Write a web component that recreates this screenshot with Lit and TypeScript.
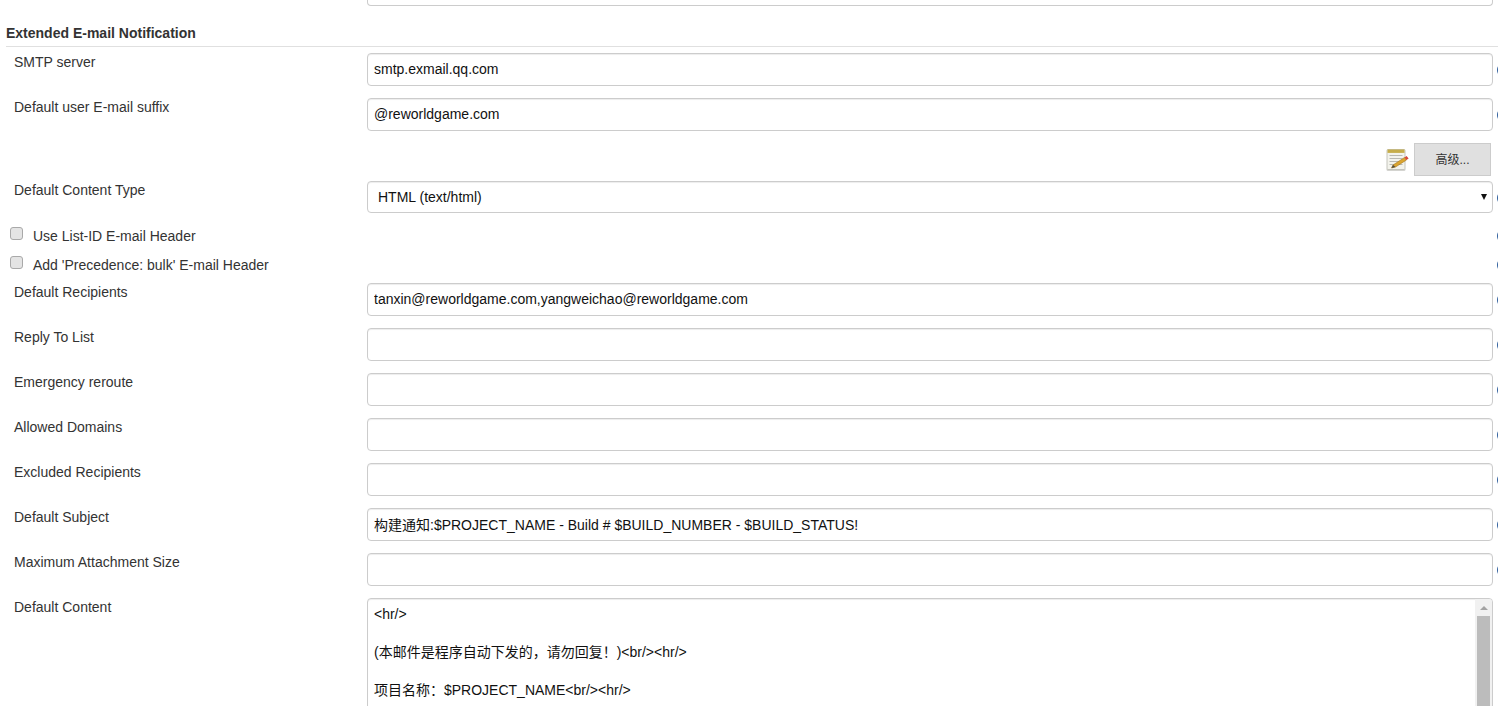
import { LitElement, html, css, svg } from "lit";
import { customElement } from "lit/decorators.js";

const FONT = `Arial, "Liberation Sans", "Noto Sans CJK SC", sans-serif`;

const help = html`<svg class="help" viewBox="0 0 16 16" width="16" height="16" aria-hidden="true">
  <circle cx="8" cy="8" r="7" fill="#2f5f9e"></circle>
  <circle cx="8" cy="8" r="5" fill="#fff"></circle>
</svg>`;

const noteIcon = html`<svg class="note" viewBox="0 0 24 24" width="24" height="24" aria-hidden="true">
  <rect x="1.5" y="20" width="19" height="3" rx="1.5" fill="#d4d4d0"></rect>
  <rect x="2" y="1.5" width="18" height="20" rx="1" fill="#f3f3ec" stroke="#c4c4bc"></rect>
  <rect x="2.5" y="1.5" width="17" height="3.4" fill="#c6ad4a"></rect>
  ${[7.5, 10.5, 13.5, 16.5].map((y) => svg`<line x1="4.5" x2="17.5" y1=${y} y2=${y} stroke="#b9b9b2"></line>`)}
  <path d="M8 17 L19.5 9.5 L21.5 12 L10.5 19 L6.5 20 Z" fill="#dba52f" stroke="#a4751f" stroke-width=".6"></path>
  <path d="M19.5 9.5 L21.6 8 L23.6 10.5 L21.5 12 Z" fill="#d8483a"></path>
  <path d="M6.5 20 L8 17 L10.5 19 Z" fill="#4a4a44"></path>
</svg>`;

const content = `<hr/>

(本邮件是程序自动下发的，请勿回复！)<br/><hr/>

项目名称：$PROJECT_NAME<br/><hr/>`;

@customElement("app-root")
export class AppRoot extends LitElement {
  static styles = css`
    :host {
      display: block;
      width: 1498px;
      height: 706px;
      overflow: hidden;
      background: #fff;
      font-family: ${css([FONT] as unknown as TemplateStringsArray)};
      font-size: 14px;
      color: #333;
    }
    .page {
      width: 1530px;
    }
    .stub {
      margin-left: 367px;
      width: 1126px;
      height: 6px;
      box-sizing: border-box;
      border: 1px solid #ccc;
      border-top: 0;
      border-radius: 0 0 4px 4px;
    }
    .section {
      margin: 19px 0 0 6px;
      width: 1492px;
      height: 22px;
      box-sizing: border-box;
      border-bottom: 1px solid #e0e0e0;
      font-weight: 700;
      line-height: 16px;
      color: #333;
    }
    .form {
      display: flex;
      flex-direction: column;
      padding-top: 6px;
    }
    .row {
      display: grid;
      grid-template-columns: 364px 1126px 16px;
      column-gap: 3px;
      height: 33px;
      margin-bottom: 12px;
    }
    .label {
      padding: 0 0 0 14px;
      line-height: 18px;
      color: #333;
    }
    .field,
    .select {
      box-sizing: border-box;
      width: 1126px;
      height: 33px;
      margin: 0;
      padding: 0 6px 2px;
      border: 1px solid #ccc;
      border-radius: 4px;
      background: #fff;
      font: 14px ${css([FONT] as unknown as TemplateStringsArray)};
      color: #111;
      outline: 0;
      box-shadow: inset 0 1px 1px rgba(0, 0, 0, 0.075);
    }
    .help {
      display: block;
      margin-top: 9px;
    }
    .advanced {
      display: flex;
      justify-content: flex-end;
      align-items: center;
      gap: 5px;
      width: 1491px;
      height: 33px;
      margin-bottom: 5px;
    }
    .note {
      display: block;
    }
    .btn {
      box-sizing: border-box;
      width: 77px;
      height: 33px;
      padding: 0 0 3px;
      border: 1px solid #ccc;
      background: #e0e0e0;
      color: #333;
      font: 12px ${css([FONT] as unknown as TemplateStringsArray)};
    }
    .selectrow {
      height: 32px;
      margin-bottom: 8px;
    }
    .selectwrap {
      position: relative;
      width: 1126px;
      height: 32px;
    }
    .select {
      appearance: none;
      height: 32px;
      padding: 0 10px;
      display: block;
    }
    .caret {
      position: absolute;
      right: 6px;
      top: 13px;
      width: 0;
      height: 0;
      border-left: 3.5px solid transparent;
      border-right: 3.5px solid transparent;
      border-top: 6px solid #111;
    }
    .check {
      display: grid;
      grid-template-columns: 1493px 16px;
      column-gap: 3px;
      align-items: center;
      height: 29px;
    }
    .checklabel {
      display: flex;
      align-items: center;
      gap: 10px;
      padding-left: 10px;
    }
    .box {
      box-sizing: border-box;
      width: 13px;
      height: 13px;
      border: 1px solid #a9a9a9;
      border-radius: 3px;
      background: #e4e4e4;
      position: relative;
      top: -2px;
    }
    .check .help {
      margin-top: 0;
    }
    .checkgroup {
      margin-bottom: 4px;
    }
    .tarow {
      height: 200px;
      margin: 0;
    }
    .tawrap {
      position: relative;
      width: 1126px;
      height: 200px;
    }
    .ta {
      display: block;
      box-sizing: border-box;
      width: 1126px;
      height: 200px;
      margin: 0;
      padding: 6px;
      border: 1px solid #ccc;
      border-radius: 4px;
      resize: none;
      overflow: hidden;
      font: 14px/19px ${css([FONT] as unknown as TemplateStringsArray)};
      color: #111;
      outline: 0;
      box-shadow: inset 0 1px 1px rgba(0, 0, 0, 0.075);
    }
    .scroll {
      position: absolute;
      top: 1px;
      right: 1px;
      bottom: 1px;
      width: 17px;
      background: #f1f1f1;
      border-radius: 0 3px 0 0;
      display: flex;
      flex-direction: column;
      align-items: center;
    }
    .up {
      margin-top: 7px;
      width: 0;
      height: 0;
      border-left: 4px solid transparent;
      border-right: 4px solid transparent;
      border-bottom: 4px solid #a3a3a3;
    }
    .thumb {
      margin-top: 6px;
      width: 13px;
      flex: 1;
      background: #bcbcbc;
    }
  `;

  private field(label: string, value = "") {
    return html`<div class="row">
      <div class="label">${label}</div>
      <input class="field" .value=${value} />
      ${help}
    </div>`;
  }

  private check(label: string) {
    return html`<div class="check">
      <div class="checklabel"><span class="box"></span><span>${label}</span></div>
      ${help}
    </div>`;
  }

  render() {
    return html`<div class="page">
      <div class="stub"></div>
      <div class="section">Extended E-mail Notification</div>
      <div class="form">
        ${this.field("SMTP server", "smtp.exmail.qq.com")}
        ${this.field("Default user E-mail suffix", "@reworldgame.com")}
        <div class="advanced">${noteIcon}<button class="btn">高级...</button></div>
        <div class="row selectrow">
          <div class="label">Default Content Type</div>
          <div class="selectwrap">
            <select class="select"><option>HTML (text/html)</option></select>
            <span class="caret"></span>
          </div>
          ${help}
        </div>
        <div class="checkgroup">
          ${this.check("Use List-ID E-mail Header")}
          ${this.check("Add 'Precedence: bulk' E-mail Header")}
        </div>
        ${this.field("Default Recipients", "tanxin@reworldgame.com,yangweichao@reworldgame.com")}
        ${this.field("Reply To List")}
        ${this.field("Emergency reroute")}
        ${this.field("Allowed Domains")}
        ${this.field("Excluded Recipients")}
        ${this.field("Default Subject", "构建通知:$PROJECT_NAME - Build # $BUILD_NUMBER - $BUILD_STATUS!")}
        ${this.field("Maximum Attachment Size")}
        <div class="row tarow">
          <div class="label">Default Content</div>
          <div class="tawrap">
            <textarea class="ta" .value=${content}></textarea>
            <div class="scroll"><span class="up"></span><span class="thumb"></span></div>
          </div>
        </div>
      </div>
    </div>`;
  }
}
